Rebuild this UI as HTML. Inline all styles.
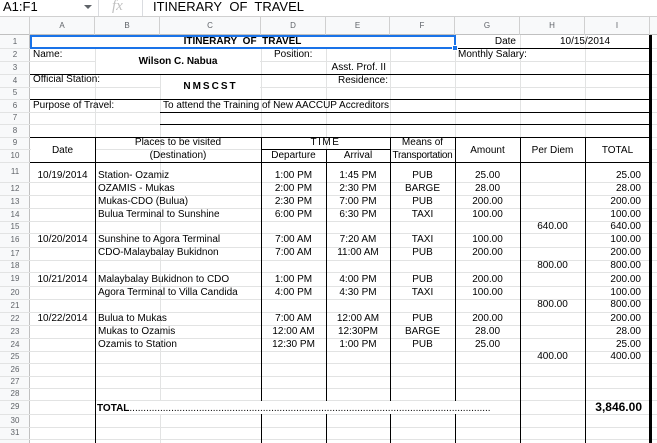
<!DOCTYPE html><html><head><meta charset="utf-8"><style>
body{margin:0;width:657px;height:443px;overflow:hidden;background:#fff;font-family:"Liberation Sans",Arial,sans-serif;position:relative}
div{position:absolute;box-sizing:border-box}
.h{height:1px;background:#e2e3e3}.v{width:1px;background:#e2e3e3}
.bh{height:1px;background:#000}.bv{width:1px;background:#000}
.t{font-size:10px;line-height:12px;height:12px;white-space:nowrap;color:#000}
.c{text-align:center}.r{text-align:right}.b{font-weight:bold}
.ch{top:17px;height:18px;font-size:8px;line-height:18px;color:#5f6368;text-align:center;border-right:1px solid #d0d0d0}
.rh{left:0;width:30px;font-size:8px;color:#5f6368;text-align:center}
</style></head><body>
<div style="left:0;top:0;width:657px;height:17px;border-bottom:1px solid #d0d0d0"></div>
<div style="left:3px;top:0;font-size:13px;line-height:14px">A1:F1</div>
<div style="left:84px;top:5px;width:0;height:0;border-left:4px solid transparent;border-right:4px solid transparent;border-top:4px solid #5f6368"></div>
<div style="left:98px;top:0;width:1px;height:16px;background:#dadce0"></div>
<div style="left:112px;top:-2px;font-size:15px;font-style:italic;color:#c0c0c0;font-family:'Liberation Serif',serif">fx</div>
<div style="left:142px;top:0;width:1px;height:16px;background:#dadce0"></div>
<div style="left:153px;top:0;font-size:13px;line-height:14px">ITINERARY&nbsp; OF&nbsp; TRAVEL</div>
<div style="left:0;top:17px;width:657px;height:18px;background:#f8f9fa;border-bottom:1px solid #c0c0c0"></div>
<div class="ch" style="left:0;width:30px"></div>
<div class="ch" style="left:30px;width:65px">A</div>
<div class="ch" style="left:95px;width:65px">B</div>
<div class="ch" style="left:160px;width:101px">C</div>
<div class="ch" style="left:261px;width:65px">D</div>
<div class="ch" style="left:326px;width:64px">E</div>
<div class="ch" style="left:390px;width:65px">F</div>
<div class="ch" style="left:455px;width:65px">G</div>
<div class="ch" style="left:520px;width:65px">H</div>
<div class="ch" style="left:585px;width:65px">I</div>
<div style="left:0;top:35px;width:30px;height:408px;background:#f8f9fa;border-right:1px solid #c0c0c0"></div>
<div class="h" style="left:0;top:48px;width:657px"></div><div class="h" style="left:0;top:61px;width:657px"></div><div class="h" style="left:0;top:74px;width:657px"></div><div class="h" style="left:0;top:87px;width:657px"></div><div class="h" style="left:0;top:99px;width:657px"></div><div class="h" style="left:0;top:112px;width:657px"></div><div class="h" style="left:0;top:124px;width:657px"></div><div class="h" style="left:0;top:137px;width:657px"></div><div class="h" style="left:0;top:149px;width:657px"></div><div class="h" style="left:0;top:162px;width:657px"></div><div class="h" style="left:0;top:182px;width:657px"></div><div class="h" style="left:0;top:195px;width:657px"></div><div class="h" style="left:0;top:208px;width:657px"></div><div class="h" style="left:0;top:221px;width:657px"></div><div class="h" style="left:0;top:233px;width:657px"></div><div class="h" style="left:0;top:247px;width:657px"></div><div class="h" style="left:0;top:260px;width:657px"></div><div class="h" style="left:0;top:272px;width:657px"></div><div class="h" style="left:0;top:286px;width:657px"></div><div class="h" style="left:0;top:299px;width:657px"></div><div class="h" style="left:0;top:312px;width:657px"></div><div class="h" style="left:0;top:325px;width:657px"></div><div class="h" style="left:0;top:338px;width:657px"></div><div class="h" style="left:0;top:351px;width:657px"></div><div class="h" style="left:0;top:363px;width:657px"></div><div class="h" style="left:0;top:376px;width:657px"></div><div class="h" style="left:0;top:388px;width:657px"></div><div class="h" style="left:0;top:400px;width:657px"></div><div class="h" style="left:0;top:414px;width:657px"></div><div class="h" style="left:0;top:427px;width:657px"></div><div class="h" style="left:0;top:439px;width:657px"></div>
<div class="v" style="left:95px;top:48px;height:395px"></div><div class="v" style="left:160px;top:48px;height:395px"></div><div class="v" style="left:261px;top:48px;height:395px"></div><div class="v" style="left:326px;top:48px;height:395px"></div><div class="v" style="left:390px;top:48px;height:395px"></div><div class="v" style="left:455px;top:35px;height:408px"></div><div class="v" style="left:520px;top:35px;height:408px"></div><div class="v" style="left:585px;top:35px;height:408px"></div>
<div class="rh" style="top:35px;line-height:13px">1</div><div class="rh" style="top:48px;line-height:13px">2</div><div class="rh" style="top:61px;line-height:13px">3</div><div class="rh" style="top:74px;line-height:13px">4</div><div class="rh" style="top:87px;line-height:12px">5</div><div class="rh" style="top:99px;line-height:13px">6</div><div class="rh" style="top:112px;line-height:12px">7</div><div class="rh" style="top:124px;line-height:13px">8</div><div class="rh" style="top:137px;line-height:12px">9</div><div class="rh" style="top:149px;line-height:13px">10</div><div class="rh" style="top:162px;line-height:20px">11</div><div class="rh" style="top:182px;line-height:13px">12</div><div class="rh" style="top:195px;line-height:13px">13</div><div class="rh" style="top:208px;line-height:13px">14</div><div class="rh" style="top:221px;line-height:12px">15</div><div class="rh" style="top:233px;line-height:14px">16</div><div class="rh" style="top:247px;line-height:13px">17</div><div class="rh" style="top:260px;line-height:12px">18</div><div class="rh" style="top:272px;line-height:14px">19</div><div class="rh" style="top:286px;line-height:13px">20</div><div class="rh" style="top:299px;line-height:13px">21</div><div class="rh" style="top:312px;line-height:13px">22</div><div class="rh" style="top:325px;line-height:13px">23</div><div class="rh" style="top:338px;line-height:13px">24</div><div class="rh" style="top:351px;line-height:12px">25</div><div class="rh" style="top:363px;line-height:13px">26</div><div class="rh" style="top:376px;line-height:12px">27</div><div class="rh" style="top:388px;line-height:12px">28</div><div class="rh" style="top:400px;line-height:14px">29</div><div class="rh" style="top:414px;line-height:13px">30</div><div class="rh" style="top:427px;line-height:12px">31</div>
<div style="left:31px;top:36px;width:423px;height:12px;background:#fff"></div>
<div style="left:96px;top:49px;width:164px;height:25px;background:#fff"></div>
<div style="left:161px;top:75px;width:99px;height:24px;background:#fff"></div>
<div style="left:31px;top:138px;width:64px;height:24px;background:#fff"></div>
<div style="left:456px;top:138px;width:194px;height:24px;background:#fff"></div>
<div style="left:96px;top:401px;width:423px;height:13px;background:#fff"></div>
<div class="bh" style="left:30px;top:48px;width:621px"></div>
<div class="bh" style="left:30px;top:74px;width:621px"></div>
<div class="bh" style="left:30px;top:99px;width:621px"></div>
<div class="bh" style="left:160px;top:112px;width:491px"></div>
<div class="bh" style="left:160px;top:124px;width:491px"></div>
<div class="bh" style="left:30px;top:137px;width:621px"></div>
<div class="bh" style="left:261px;top:149px;width:129px"></div>
<div class="bh" style="left:30px;top:162px;width:621px"></div>
<div class="bv" style="left:95px;top:137px;height:306px"></div>
<div class="bv" style="left:261px;top:137px;height:264px"></div><div class="bv" style="left:261px;top:414px;height:29px"></div>
<div class="bv" style="left:326px;top:149px;height:252px"></div><div class="bv" style="left:326px;top:414px;height:29px"></div>
<div class="bv" style="left:390px;top:137px;height:264px"></div><div class="bv" style="left:390px;top:414px;height:29px"></div>
<div class="bv" style="left:455px;top:137px;height:264px"></div><div class="bv" style="left:455px;top:414px;height:29px"></div>
<div class="bv" style="left:520px;top:137px;height:306px"></div>
<div class="bv" style="left:585px;top:137px;height:306px"></div>
<div style="left:649px;top:35px;width:3px;height:408px;background:#000"></div>
<div style="left:30px;top:35px;width:426px;height:14px;border:2px solid #1a73e8"></div>
<div style="left:452px;top:45px;width:6px;height:6px;background:#1a73e8;border:1px solid #fff"></div>
<div class="t b c" style="left:30px;top:36px;width:425px">ITINERARY&nbsp; OF&nbsp; TRAVEL</div>
<div class="t r" style="left:455px;top:36px;width:61px">Date</div>
<div class="t c" style="left:520px;top:36px;width:130px">10/15/2014</div>
<div class="t" style="left:33px;top:49px">Name:</div>
<div class="t" style="left:274px;top:49px">Position:</div>
<div class="t" style="left:458px;top:49px">Monthly Salary:</div>
<div class="t b c" style="left:95px;top:56px;width:166px">Wilson C. Nabua</div>
<div class="t r" style="left:326px;top:62px;width:60px">Asst. Prof. II</div>
<div class="t" style="left:33px;top:74px">Official Station:</div>
<div class="t r" style="left:326px;top:75px;width:62px">Residence:</div>
<div class="t b c" style="left:160px;top:81px;width:101px;letter-spacing:2px">NMSCST</div>
<div class="t" style="left:33px;top:100px">Purpose of Travel:</div>
<div class="t" style="left:163px;top:100px">To attend the Training of New AACCUP Accreditors</div>
<div class="t c" style="left:30px;top:145px;width:65px">Date</div>
<div class="t c" style="left:95px;top:137px;width:166px">Places to be visited</div>
<div class="t c" style="left:95px;top:150px;width:166px">(Destination)</div>
<div class="t c" style="left:261px;top:137px;width:129px;letter-spacing:1.5px">TIME</div>
<div class="t c" style="left:261px;top:150px;width:65px">Departure</div>
<div class="t c" style="left:326px;top:150px;width:64px">Arrival</div>
<div class="t c" style="left:390px;top:137px;width:65px">Means of</div>
<div class="t c" style="left:388px;top:150px;width:69px;letter-spacing:-0.3px">Transportation</div>
<div class="t c" style="left:455px;top:145px;width:65px">Amount</div>
<div class="t c" style="left:520px;top:145px;width:65px">Per Diem</div>
<div class="t c" style="left:585px;top:145px;width:65px">TOTAL</div>
<div class="t c" style="left:30px;top:170px;width:65px">10/19/2014</div>
<div class="t" style="left:98px;top:170px">Station- Ozamiz</div><div class="t c" style="left:261px;top:170px;width:65px">1:00 PM</div><div class="t c" style="left:326px;top:170px;width:64px">1:45 PM</div><div class="t c" style="left:390px;top:170px;width:65px">PUB</div><div class="t c" style="left:455px;top:170px;width:65px">25.00</div><div class="t r" style="left:585px;top:170px;width:56px">25.00</div>
<div class="t" style="left:98px;top:183px">OZAMIS - Mukas</div><div class="t c" style="left:261px;top:183px;width:65px">2:00 PM</div><div class="t c" style="left:326px;top:183px;width:64px">2:30 PM</div><div class="t c" style="left:390px;top:183px;width:65px">BARGE</div><div class="t c" style="left:455px;top:183px;width:65px">28.00</div><div class="t r" style="left:585px;top:183px;width:56px">28.00</div>
<div class="t" style="left:98px;top:196px">Mukas-CDO (Bulua)</div><div class="t c" style="left:261px;top:196px;width:65px">2:30 PM</div><div class="t c" style="left:326px;top:196px;width:64px">7:00 PM</div><div class="t c" style="left:390px;top:196px;width:65px">PUB</div><div class="t c" style="left:455px;top:196px;width:65px">200.00</div><div class="t r" style="left:585px;top:196px;width:56px">200.00</div>
<div class="t" style="left:98px;top:209px">Bulua Terminal to Sunshine</div><div class="t c" style="left:261px;top:209px;width:65px">6:00 PM</div><div class="t c" style="left:326px;top:209px;width:64px">6:30 PM</div><div class="t c" style="left:390px;top:209px;width:65px">TAXI</div><div class="t c" style="left:455px;top:209px;width:65px">100.00</div><div class="t r" style="left:585px;top:209px;width:56px">100.00</div>
<div class="t c" style="left:520px;top:221px;width:65px">640.00</div><div class="t r" style="left:585px;top:221px;width:56px">640.00</div>
<div class="t c" style="left:30px;top:234px;width:65px">10/20/2014</div>
<div class="t" style="left:98px;top:234px">Sunshine to Agora Terminal</div><div class="t c" style="left:261px;top:234px;width:65px">7:00 AM</div><div class="t c" style="left:326px;top:234px;width:64px">7:20 AM</div><div class="t c" style="left:390px;top:234px;width:65px">TAXI</div><div class="t c" style="left:455px;top:234px;width:65px">100.00</div><div class="t r" style="left:585px;top:234px;width:56px">100.00</div>
<div class="t" style="left:98px;top:247px">CDO-Malaybalay Bukidnon</div><div class="t c" style="left:261px;top:247px;width:65px">7:00 AM</div><div class="t c" style="left:326px;top:247px;width:64px">11:00 AM</div><div class="t c" style="left:390px;top:247px;width:65px">PUB</div><div class="t c" style="left:455px;top:247px;width:65px">200.00</div><div class="t r" style="left:585px;top:247px;width:56px">200.00</div>
<div class="t c" style="left:520px;top:260px;width:65px">800.00</div><div class="t r" style="left:585px;top:260px;width:56px">800.00</div>
<div class="t c" style="left:30px;top:274px;width:65px">10/21/2014</div>
<div class="t" style="left:98px;top:274px">Malaybalay Bukidnon to CDO</div><div class="t c" style="left:261px;top:274px;width:65px">1:00 PM</div><div class="t c" style="left:326px;top:274px;width:64px">4:00 PM</div><div class="t c" style="left:390px;top:274px;width:65px">PUB</div><div class="t c" style="left:455px;top:274px;width:65px">200.00</div><div class="t r" style="left:585px;top:274px;width:56px">200.00</div>
<div class="t" style="left:98px;top:287px">Agora Terminal to Villa Candida</div><div class="t c" style="left:261px;top:287px;width:65px">4:00 PM</div><div class="t c" style="left:326px;top:287px;width:64px">4:30 PM</div><div class="t c" style="left:390px;top:287px;width:65px">TAXI</div><div class="t c" style="left:455px;top:287px;width:65px">100.00</div><div class="t r" style="left:585px;top:287px;width:56px">100.00</div>
<div class="t c" style="left:520px;top:299px;width:65px">800.00</div><div class="t r" style="left:585px;top:299px;width:56px">800.00</div>
<div class="t c" style="left:30px;top:313px;width:65px">10/22/2014</div>
<div class="t" style="left:98px;top:313px">Bulua to Mukas</div><div class="t c" style="left:261px;top:313px;width:65px">7:00 AM</div><div class="t c" style="left:326px;top:313px;width:64px">12:00 AM</div><div class="t c" style="left:390px;top:313px;width:65px">PUB</div><div class="t c" style="left:455px;top:313px;width:65px">200.00</div><div class="t r" style="left:585px;top:313px;width:56px">200.00</div>
<div class="t" style="left:98px;top:326px">Mukas to Ozamis</div><div class="t c" style="left:261px;top:326px;width:65px">12:00 AM</div><div class="t c" style="left:326px;top:326px;width:64px">12:30PM</div><div class="t c" style="left:390px;top:326px;width:65px">BARGE</div><div class="t c" style="left:455px;top:326px;width:65px">28.00</div><div class="t r" style="left:585px;top:326px;width:56px">28.00</div>
<div class="t" style="left:98px;top:339px">Ozamis to Station</div><div class="t c" style="left:261px;top:339px;width:65px">12:30 PM</div><div class="t c" style="left:326px;top:339px;width:64px">1:00 PM</div><div class="t c" style="left:390px;top:339px;width:65px">PUB</div><div class="t c" style="left:455px;top:339px;width:65px">25.00</div><div class="t r" style="left:585px;top:339px;width:56px">25.00</div>
<div class="t c" style="left:520px;top:351px;width:65px">400.00</div><div class="t r" style="left:585px;top:351px;width:56px">400.00</div>
<div class="t b" style="left:97px;top:403px;width:393px;overflow:hidden;text-overflow:clip">TOTAL<span style="font-weight:normal">.................................................................................................................................................................</span></div>
<div class="t b r" style="left:585px;top:400px;width:57px;font-size:12px;line-height:14px;height:14px">3,846.00</div>
</body></html>
